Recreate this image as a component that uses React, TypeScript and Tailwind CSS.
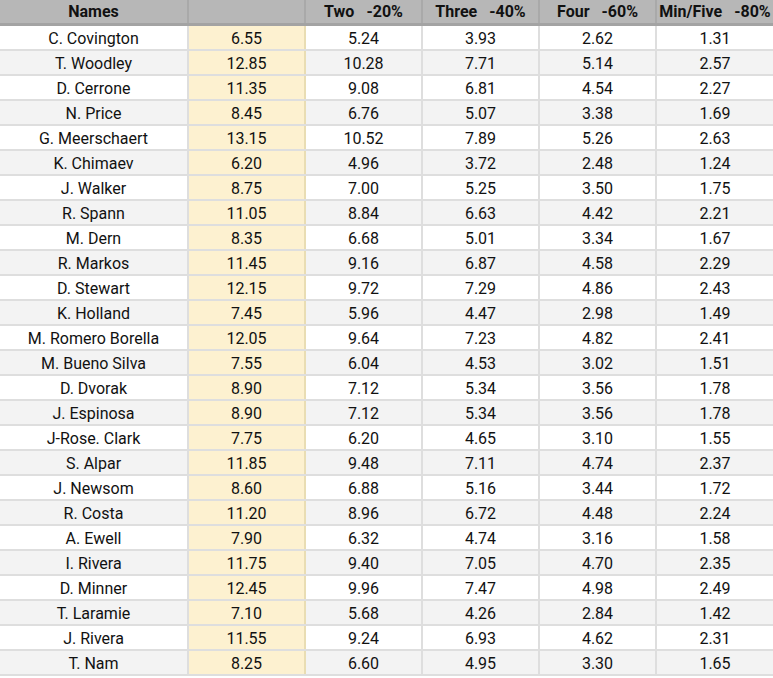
const rows: [string, string, string, string, string, string][] = [
  ["C. Covington", "6.55", "5.24", "3.93", "2.62", "1.31"],
  ["T. Woodley", "12.85", "10.28", "7.71", "5.14", "2.57"],
  ["D. Cerrone", "11.35", "9.08", "6.81", "4.54", "2.27"],
  ["N. Price", "8.45", "6.76", "5.07", "3.38", "1.69"],
  ["G. Meerschaert", "13.15", "10.52", "7.89", "5.26", "2.63"],
  ["K. Chimaev", "6.20", "4.96", "3.72", "2.48", "1.24"],
  ["J. Walker", "8.75", "7.00", "5.25", "3.50", "1.75"],
  ["R. Spann", "11.05", "8.84", "6.63", "4.42", "2.21"],
  ["M. Dern", "8.35", "6.68", "5.01", "3.34", "1.67"],
  ["R. Markos", "11.45", "9.16", "6.87", "4.58", "2.29"],
  ["D. Stewart", "12.15", "9.72", "7.29", "4.86", "2.43"],
  ["K. Holland", "7.45", "5.96", "4.47", "2.98", "1.49"],
  ["M. Romero Borella", "12.05", "9.64", "7.23", "4.82", "2.41"],
  ["M. Bueno Silva", "7.55", "6.04", "4.53", "3.02", "1.51"],
  ["D. Dvorak", "8.90", "7.12", "5.34", "3.56", "1.78"],
  ["J. Espinosa", "8.90", "7.12", "5.34", "3.56", "1.78"],
  ["J-Rose. Clark", "7.75", "6.20", "4.65", "3.10", "1.55"],
  ["S. Alpar", "11.85", "9.48", "7.11", "4.74", "2.37"],
  ["J. Newsom", "8.60", "6.88", "5.16", "3.44", "1.72"],
  ["R. Costa", "11.20", "8.96", "6.72", "4.48", "2.24"],
  ["A. Ewell", "7.90", "6.32", "4.74", "3.16", "1.58"],
  ["I. Rivera", "11.75", "9.40", "7.05", "4.70", "2.35"],
  ["D. Minner", "12.45", "9.96", "7.47", "4.98", "2.49"],
  ["T. Laramie", "7.10", "5.68", "4.26", "2.84", "1.42"],
  ["J. Rivera", "11.55", "9.24", "6.93", "4.62", "2.31"],
  ["T. Nam", "8.25", "6.60", "4.95", "3.30", "1.65"],
];

const headers: [string, string][] = [
  ["Names", ""],
  ["", ""],
  ["Two", "-20%"],
  ["Three", "-40%"],
  ["Four", "-60%"],
  ["Min/Five", "-80%"],
];

const cols = "grid grid-cols-[189px_117px_117px_117px_117px_116px]";

export default function App() {
  return (
    <div className="w-[773px] h-[678px] overflow-hidden bg-white font-['Roboto',sans-serif] text-[16px] text-[#111]">
      <div className={`${cols} h-[26px] bg-[#b7b7b7] border-b-[3px] border-[#a3a3a3]`}>
        {headers.map(([a, b], i) => (
          <div
            key={i}
            className="flex items-center justify-center gap-[12px] font-bold border-r-2 border-[#a9a9a9] last:border-r-0 leading-none pt-[1px]"
          >
            {a && <span>{a}</span>}
            {b && <span>{b}</span>}
          </div>
        ))}
      </div>
      {rows.map((r, ri) => (
        <div
          key={ri}
          className={`${cols} h-[25px] border-b-2 border-[#dedede] ${ri % 2 ? "bg-[#f3f3f3]" : "bg-white"}`}
        >
          {r.map((c, ci) => (
            <div
              key={ci}
              className={`flex items-center justify-center border-r-2 last:border-r-0 leading-none pt-[2px] ${
                ci === 1 ? "bg-[#fdf1d0] border-[#e9ddb3]" : "border-[#dedede]"
              }`}
            >
              {c}
            </div>
          ))}
        </div>
      ))}
    </div>
  );
}
